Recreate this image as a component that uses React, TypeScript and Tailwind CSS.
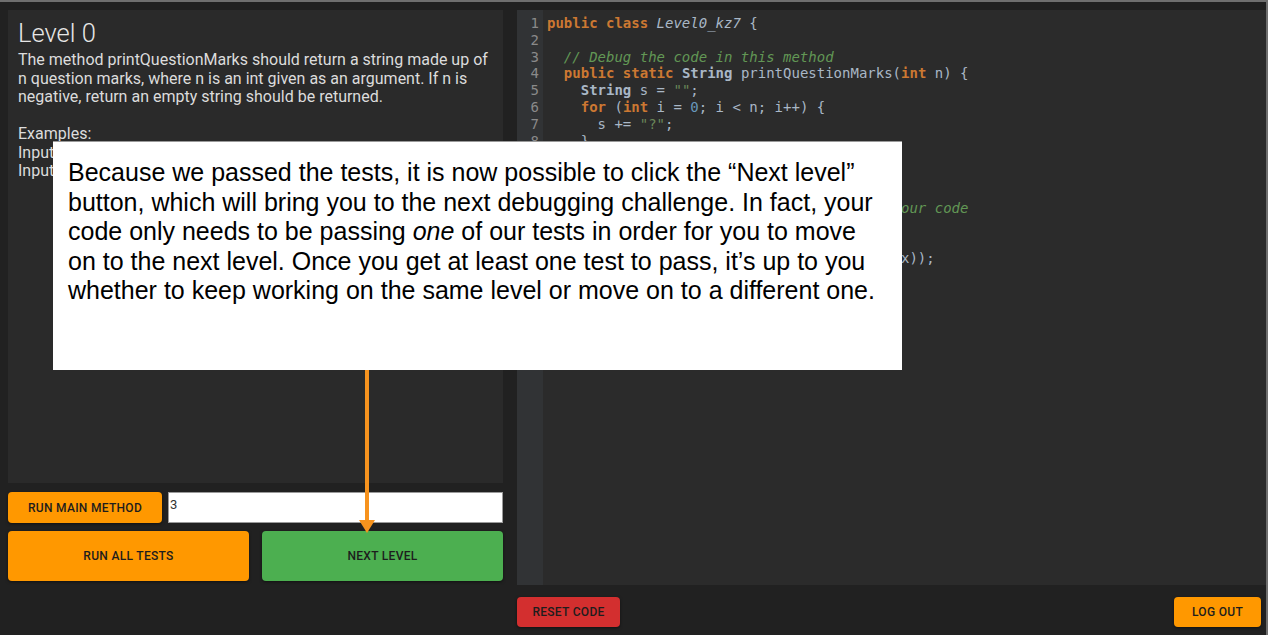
import React from 'react'

type Tok = [string, string]

// darcula-ish colours
const kw = 'text-[#cc7832] font-bold'
const plain = 'text-[#a9b7c6]'
const type = 'text-[#a9b7c6] font-bold'
const cmt = 'text-[#629755] italic'
const num = 'text-[#6897bb]'
const str = 'text-[#6a8759]'
const cls = 'text-[#a9b7c6] italic'

const codeLines: Tok[][] = [
  [[kw, 'public class '], [cls, 'Level0_kz7'], [plain, ' {']],
  [],
  [[plain, '  '], [cmt, '// Debug the code in this method']],
  [[plain, '  '], [kw, 'public static '], [type, 'String'], [plain, ' printQuestionMarks('], [kw, 'int'], [plain, ' n) {']],
  [[plain, '    '], [type, 'String'], [plain, ' s = '], [str, '""'], [plain, ';']],
  [[plain, '    '], [kw, 'for'], [plain, ' ('], [kw, 'int'], [plain, ' i = '], [num, '0'], [plain, '; i < n; i++) {']],
  [[plain, '      s += '], [str, '"?"'], [plain, ';']],
  [[plain, '    }']],
  [[plain, '    '], [kw, 'return'], [plain, ' s;']],
  [[plain, '  }']],
  [],
  [[plain, '  '], [cmt, '// Use the main method below to verify your code']],
  [[plain, '  '], [kw, 'public static void'], [plain, ' main('], [type, 'String'], [plain, '[] args) {']],
  [[plain, '    '], [kw, 'int'], [plain, ' x = Integer.parseInt(args['], [num, '0'], [plain, ']);']],
  [[plain, '    System.out.println(printQuestionMarks(x));']],
  [[plain, '  }']],
  [[plain, '}']],
]

function Btn({ className, children }: { className: string; children: React.ReactNode }) {
  return (
    <button
      className={`rounded-[4px] text-[12px] font-medium uppercase tracking-[0.3px] text-[#1d1d1d] shadow-[0_1px_3px_rgba(0,0,0,0.5)] ${className}`}
    >
      {children}
    </button>
  )
}

export default function App() {
  return (
    <div className="relative w-[1268px] h-[635px] overflow-hidden bg-[#212121] border-t-2 border-r-2 border-[#6f6f6f] font-['Roboto',sans-serif]">
      <div className="flex h-full gap-[14px] pl-2 pt-2">
        {/* left column */}
        <div className="flex w-[495px] flex-col">
          <div className="h-[473px] bg-[#2a2a2a] px-[10px] pt-[8px] text-[#e6e6e6]">
            <h1 className="text-[25.5px] leading-[30px] font-light">Level 0</h1>
            <p className="mt-[3px] whitespace-pre text-[16px] leading-[18.5px] text-[#dcdcdc]">
              {'The method printQuestionMarks should return a string made up of\nn question marks, where n is an int given as an argument. If n is\nnegative, return an empty string should be returned.\n\nExamples:\nInput: 3, Output: "???"\nInput: -1, Output: ""'}
            </p>
          </div>
          <div className="mt-[9px] flex h-[31px] gap-[6px]">
            <Btn className="w-[154px] bg-[#ff9800]">Run main method</Btn>
            <input
              readOnly
              value="3"
              className="flex-1 border border-[#9a9a9a] bg-white px-[1px] pb-[6px] text-[13px] text-[#333] outline-none"
            />
          </div>
          <div className="mt-2 flex h-[50px] gap-[13px]">
            <Btn className="flex-1 bg-[#ff9800]">Run all tests</Btn>
            <Btn className="flex-1 bg-[#4caf50]">Next level</Btn>
          </div>
        </div>

        {/* right column */}
        <div className="flex w-[749px] flex-col">
          <div className="flex h-[575px] bg-[#2b2b2b] font-['DejaVu_Sans_Mono',monospace] text-[14px] leading-[16.8px]">
            <div className="w-[26px] bg-[#313335] pt-[5px] pr-[4px] text-right text-[#8a8a8a]">
              {codeLines.map((_, i) => (
                <div key={i}>{i + 1}</div>
              ))}
            </div>
            <div className="pl-[4px] pt-[5px]">
              {codeLines.map((line, i) => (
                <div key={i} className="h-[16.8px] whitespace-pre">
                  {line.map(([c, t], j) => (
                    <span key={j} className={c}>
                      {t}
                    </span>
                  ))}
                </div>
              ))}
            </div>
          </div>
          <div className="mt-[12px] flex h-[30px] justify-between pr-[5px]">
            <Btn className="w-[103px] bg-[#d32f2f]">Reset code</Btn>
            <Btn className="w-[87px] bg-[#ff9800]">Log out</Btn>
          </div>
        </div>
      </div>

      {/* callout */}
      <div className="absolute left-[53px] top-[139px] h-[229px] w-[849px] border-t border-[#9a9a9a] bg-white px-[15px] pt-[16px] font-['Liberation_Sans',Arial,sans-serif] text-[25px] leading-[29.6px] text-black whitespace-nowrap">
        Because we passed the tests, it is now possible to click the “Next level”
        <br />
        button, which will bring you to the next debugging challenge. In fact, your
        <br />
        code only needs to be passing <i>one</i> of our tests in order for you to move
        <br />
        on to the next level. Once you get at least one test to pass, it’s up to you
        <br />
        whether to keep working on the same level or move on to a different one.
      </div>

      <svg className="absolute left-[359px] top-[368px]" width="16" height="165" viewBox="0 0 16 165">
        <rect x="6" y="0" width="4" height="152" fill="#f7931e" />
        <polygon points="0,150 16,150 8,163" fill="#f7931e" />
      </svg>
    </div>
  )
}
